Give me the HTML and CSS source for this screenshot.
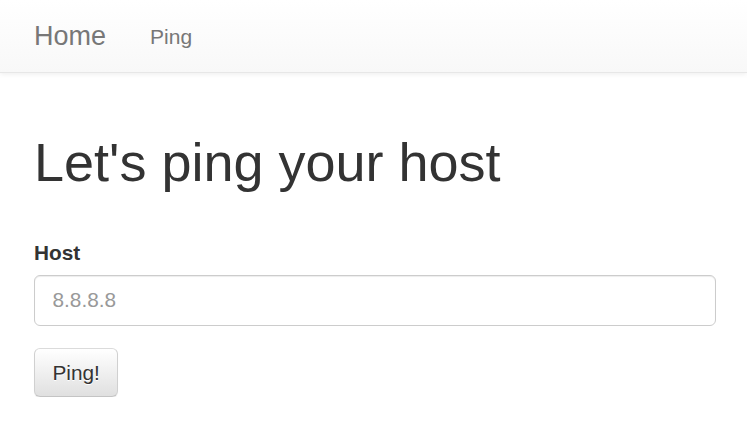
FILE: index.html
```html
<!DOCTYPE html>
<html>
<head>
<meta charset="utf-8">
<title>Ping</title>
<link rel="stylesheet" href="styles.css">
</head>
<body>
<nav class="navbar">
  <a class="brand" href="#">Home</a>
  <a class="nav-link" href="#">Ping</a>
</nav>
<main class="container">
  <h1 class="title">Let's ping your host</h1>
  <form class="form">
    <div class="form-group">
      <label class="label" for="host">Host</label>
      <input class="input" id="host" type="text" placeholder="8.8.8.8">
    </div>
    <button class="btn" type="button">Ping!</button>
  </form>
</main>
</body>
</html>
```
FILE: styles.css
```css
html, body {
  margin: 0;
  padding: 0;
  background: #fff;
}
body {
  font-family: "Liberation Sans", Arial, sans-serif;
  color: #333;
  font-size: 20.5px;
}
.navbar {
  display: flex;
  align-items: flex-start;
  height: 72px;
  padding: 0 12px;
  background: linear-gradient(to bottom, #ffffff 0%, #f8f8f8 100%);
  border-bottom: 1px solid #e7e7e7;
  box-shadow: inset 0 1px 0 rgba(255,255,255,.15), 0 1px 5px rgba(0,0,0,.075);
}
.brand {
  display: block;
  padding: 22px 22px;
  font-size: 27px;
  line-height: 29px;
  color: #777;
  text-decoration: none;
  text-shadow: 0 1px 0 rgba(255,255,255,.25);
}
.nav-link {
  display: block;
  padding: 21.5px 22px;
  font-size: 21px;
  line-height: 29px;
  color: #777;
  text-decoration: none;
  text-shadow: 0 1px 0 rgba(255,255,255,.25);
}
.container {
  padding: 0 31px 0 34px;
}
.title {
  margin: 59.5px 0 0;
  font-size: 54px;
  line-height: 58px;
  font-weight: 500;
  color: #333;
}
.form {
  margin-top: 47.5px;
}
.form-group {
  margin-bottom: 22px;
}
.label {
  display: block;
  font-weight: bold;
  font-size: 20.8px;
  line-height: 29.3px;
  margin-bottom: 7.3px;
}
.input {
  display: block;
  box-sizing: border-box;
  width: 100%;
  height: 51px;
  padding: 9px 17.5px;
  font-family: "Liberation Sans", Arial, sans-serif;
  font-size: 20.8px;
  color: #555;
  background: #fff;
  border: 1px solid #ccc;
  border-radius: 6px;
  box-shadow: inset 0 1px 1px rgba(0,0,0,.075);
  outline: none;
}
.input::placeholder {
  color: #999;
}
.btn {
  box-sizing: border-box;
  height: 49px;
  padding: 9px 17.5px;
  font-family: "Liberation Sans", Arial, sans-serif;
  font-size: 20.8px;
  line-height: 29px;
  color: #333;
  background: linear-gradient(to bottom, #ffffff 0%, #e0e0e0 100%);
  border: 1px solid #ccc;
  border-color: #dbdbdb #d0d0d0 #c4c4c4;
  border-radius: 6px;
  text-shadow: 0 1px 0 #fff;
  box-shadow: inset 0 1px 0 rgba(255,255,255,.15), 0 1px 1px rgba(0,0,0,.075);
}
```
